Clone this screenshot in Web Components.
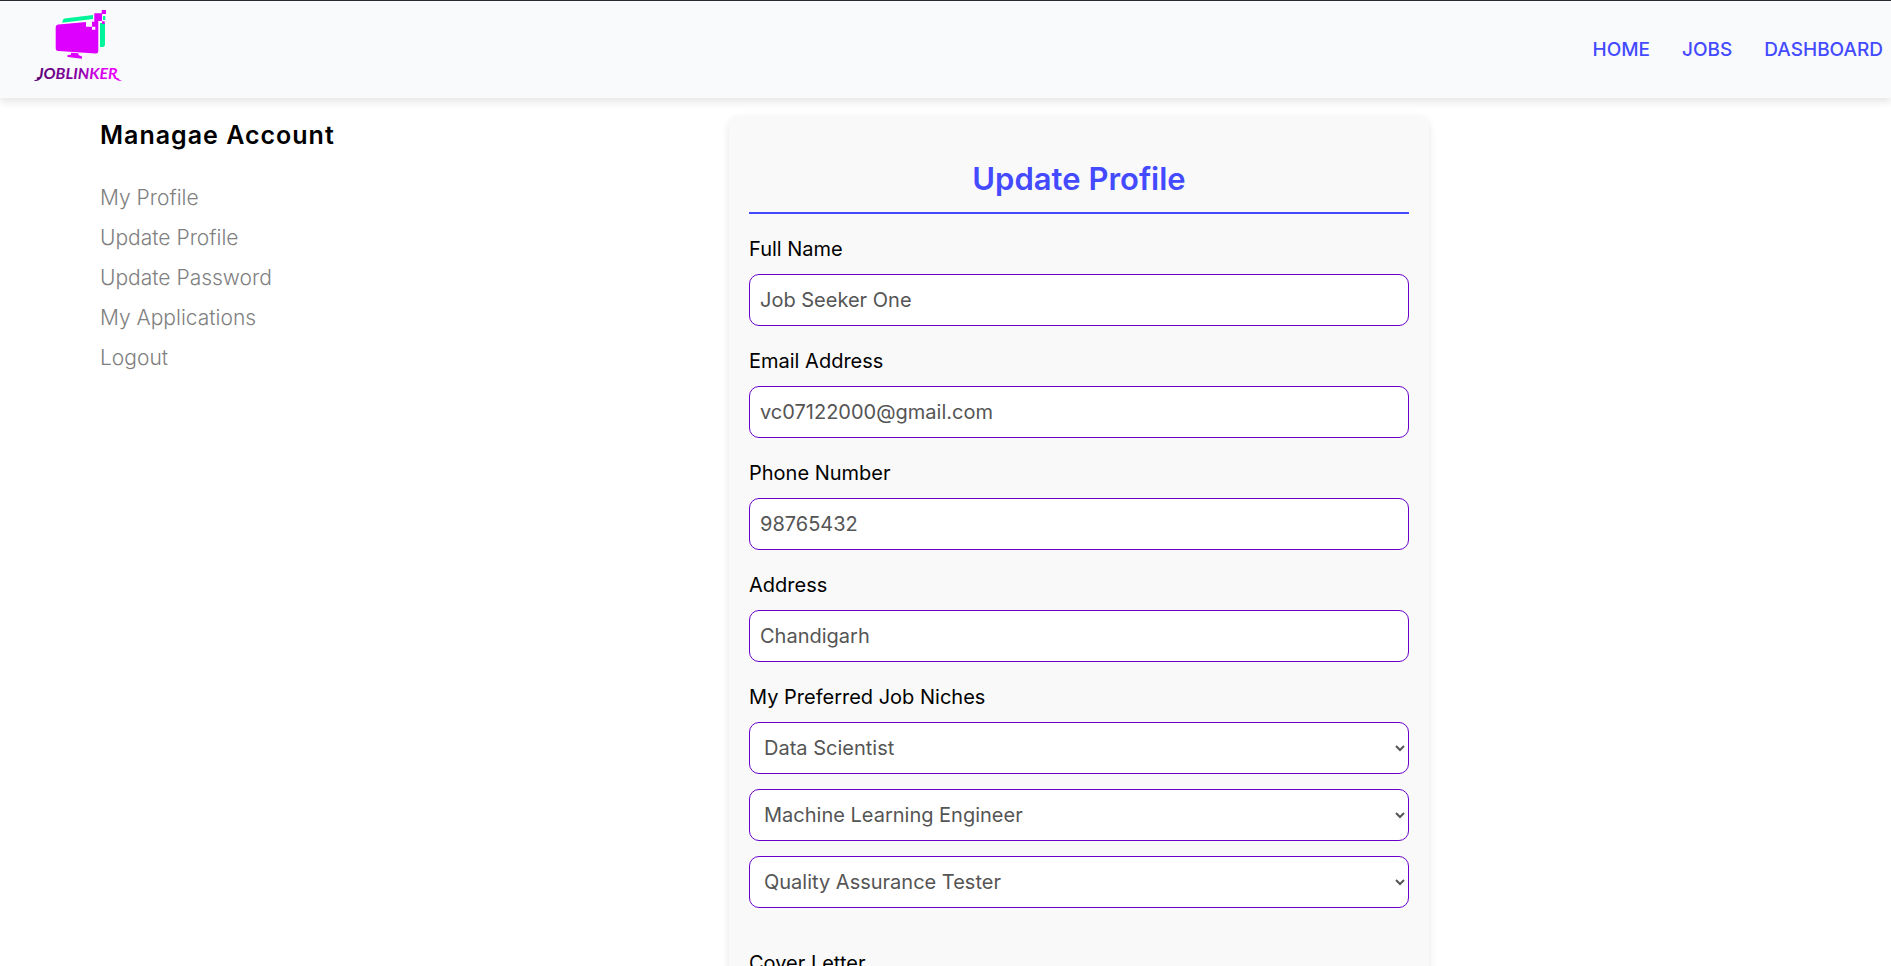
<!DOCTYPE html>
<html lang="en">
<head>
<meta charset="utf-8">
<title>JobLinker – Update Profile</title>
<style>
  body { margin: 0; font-family: Inter, "Open Sans", sans-serif; font-size: 20px; line-height: 30px; color: #000; background: #fff; }
</style>
</head>
<body>
<job-app></job-app>
<script>
const define = (name, html, setup) => customElements.define(name, class extends HTMLElement {
  constructor() {
    super();
    this.attachShadow({ mode: "open" }).innerHTML = html;
  }
  connectedCallback() { if (setup) setup(this, this.shadowRoot); }
});

define("job-logo", `
<style>
  :host { display: block; }
  svg { display: block; }
</style>
<svg width="96" height="97" viewBox="0 -3 96 97" role="img" aria-label="JobLinker">
  <defs><linearGradient id="ink" x1="0" x2="1"><stop offset="0" stop-color="#5c0078"/><stop offset=".55" stop-color="#8a00a8"/><stop offset=".7" stop-color="#c800e0"/><stop offset="1" stop-color="#f000ff"/></linearGradient></defs>
  <path fill="#00f59b" d="M34.500 14.500L63 11V15L32 18.700L33 15.700Q33.500 14.700 34.500 14.500ZM70 19H75V40.500Q75 42.500 73 43H70ZM73 12H75.300V16H73Z"/>
  <path fill="#de00ff" fill-rule="evenodd" d="M28.500 20.500L56 18V22.700H62V17.700H64.300V17H68.300V47Q68.300 49.700 65.500 49.500L28.500 47Q25.700 46.800 25.700 44V23.500Q25.700 20.800 28.500 20.500ZM62 22.700V25.700H65.300V22.700Z"/>
  <path fill="#de00ff" d="M41 48.700L48.500 49.300V51L52 52.500V54.700L37.500 53V51L41 50.700ZM64.300 9.300H72V17H64.300ZM71.700 6H76V10H71.700ZM72 17.300H74.700V20H72Z"/>
  <text x="7" y="75" font-family="Lato, sans-serif" font-size="16" font-weight="700" font-style="italic" fill="url(#ink)">JOBLINKER</text>
  <path fill="#5c0078" d="M4.500 76Q7 76.500 8.500 73.500L11 74Q9 77.500 4.500 77Z"/>
  <path fill="#e800fa" d="M85 74.500L88 74Q89 76 92 77Q88 77.500 85 74.500Z"/>
</svg>`);

define("job-header", `
<style>
  :host { display: block; position: relative; border-top: 1px solid #2b2a33; background: #f9fafc; box-shadow: 0 4px 8px rgba(0,0,0,.1); }
  header { display: flex; justify-content: space-between; align-items: center; height: 97px; padding: 0 8px 0 30px; }
  nav { display: flex; gap: 32px; }
  a { color: #444aff; font-size: 19px; font-weight: 500; text-decoration: none; }
</style>
<header>
  <job-logo></job-logo>
  <nav><a href="#home">HOME</a><a href="#jobs">JOBS</a><a href="#dashboard">DASHBOARD</a></nav>
</header>`);

define("job-sidebar", `
<style>
  :host { display: block; padding-top: 2px; }
  h2 { margin: 0 0 30px; font-size: 25px; line-height: 36px; font-weight: 600; letter-spacing: 1px; white-space: nowrap; }
  ul { list-style: none; margin: 0; padding: 0; display: grid; gap: 10px; }
  a { color: #808080; font-size: 21px; font-weight: 300; text-decoration: none; }
</style>
<aside>
  <h2>Managae Account</h2>
  <ul>
    <li><a href="#profile">My Profile</a></li>
    <li><a href="#update-profile">Update Profile</a></li>
    <li><a href="#update-password">Update Password</a></li>
    <li><a href="#applications">My Applications</a></li>
    <li><a href="#logout">Logout</a></li>
  </ul>
</aside>`);

const controlCss = `
  :host { display: block; }
  .field { display: grid; gap: 10px; }
  input, select, textarea { box-sizing: border-box; display: block; width: 100%; margin: 0; padding: 10px; font: inherit; color: #555; background: #fff; border: 1px solid #6a00c9; border-radius: 10px; outline: none; }
  input, select { height: 52px; }
  textarea { height: 240px; resize: vertical; }
`;

define("job-field", `
<style>${controlCss}</style>
<div class="field"><label for="control"><slot></slot></label><input id="control"></div>`,
(host, root) => {
  const input = root.querySelector("input");
  input.type = host.getAttribute("type") || "text";
  input.value = host.getAttribute("value") || "";
});

define("job-niches", `
<style>${controlCss}
  .choices { display: grid; gap: 15px; }
</style>
<div class="field"><label for="n0"><slot></slot></label><div class="choices"></div></div>`,
(host, root) => {
  const names = host.getAttribute("values").split(",");
  root.querySelector(".choices").innerHTML = names.map((name, i) =>
    `<select id="n${i}" aria-label="Job niche ${i + 1}"><option>${name}</option></select>`).join("");
});

define("job-textarea", `
<style>${controlCss}</style>
<div class="field"><label for="control"><slot></slot></label><textarea id="control"></textarea></div>`);

define("job-card", `
<style>
  :host { display: block; box-sizing: border-box; width: 100%; max-width: 700px; padding: 41px 20px 20px; background: #f9f9f9; border-radius: 10px; box-shadow: 0 4px 8px rgba(0,0,0,.1); }
  h1 { margin: 0 0 20px; padding-bottom: 11px; border-bottom: 2px solid #444aff; color: #444aff; font-size: 31px; line-height: 45px; font-weight: 600; text-align: center; }
  form { display: grid; gap: 20px; }
  .letter { padding-top: 20px; }
</style>
<h1>Update Profile</h1>
<form>
  <job-field value="Job Seeker One">Full Name</job-field>
  <job-field type="email" value="vc07122000@gmail.com">Email Address</job-field>
  <job-field type="tel" value="98765432">Phone Number</job-field>
  <job-field value="Chandigarh">Address</job-field>
  <job-niches values="Data Scientist,Machine Learning Engineer,Quality Assurance Tester">My Preferred Job Niches</job-niches>
  <job-textarea class="letter">Cover Letter</job-textarea>
</form>`);

define("job-app", `
<style>
  :host { display: flex; flex-direction: column; height: 100vh; }
  .page { flex: 1; min-height: 0; overflow-y: auto; scrollbar-width: none; }
  main { display: grid; grid-template-columns: 267px 1fr; padding: 17px 100px 20px; }
  job-card { justify-self: center; }
  job-header { z-index: 1; }
</style>
<job-header></job-header>
<div class="page">
  <main><job-sidebar></job-sidebar><job-card></job-card></main>
</div>`);
</script>
</body>
</html>
